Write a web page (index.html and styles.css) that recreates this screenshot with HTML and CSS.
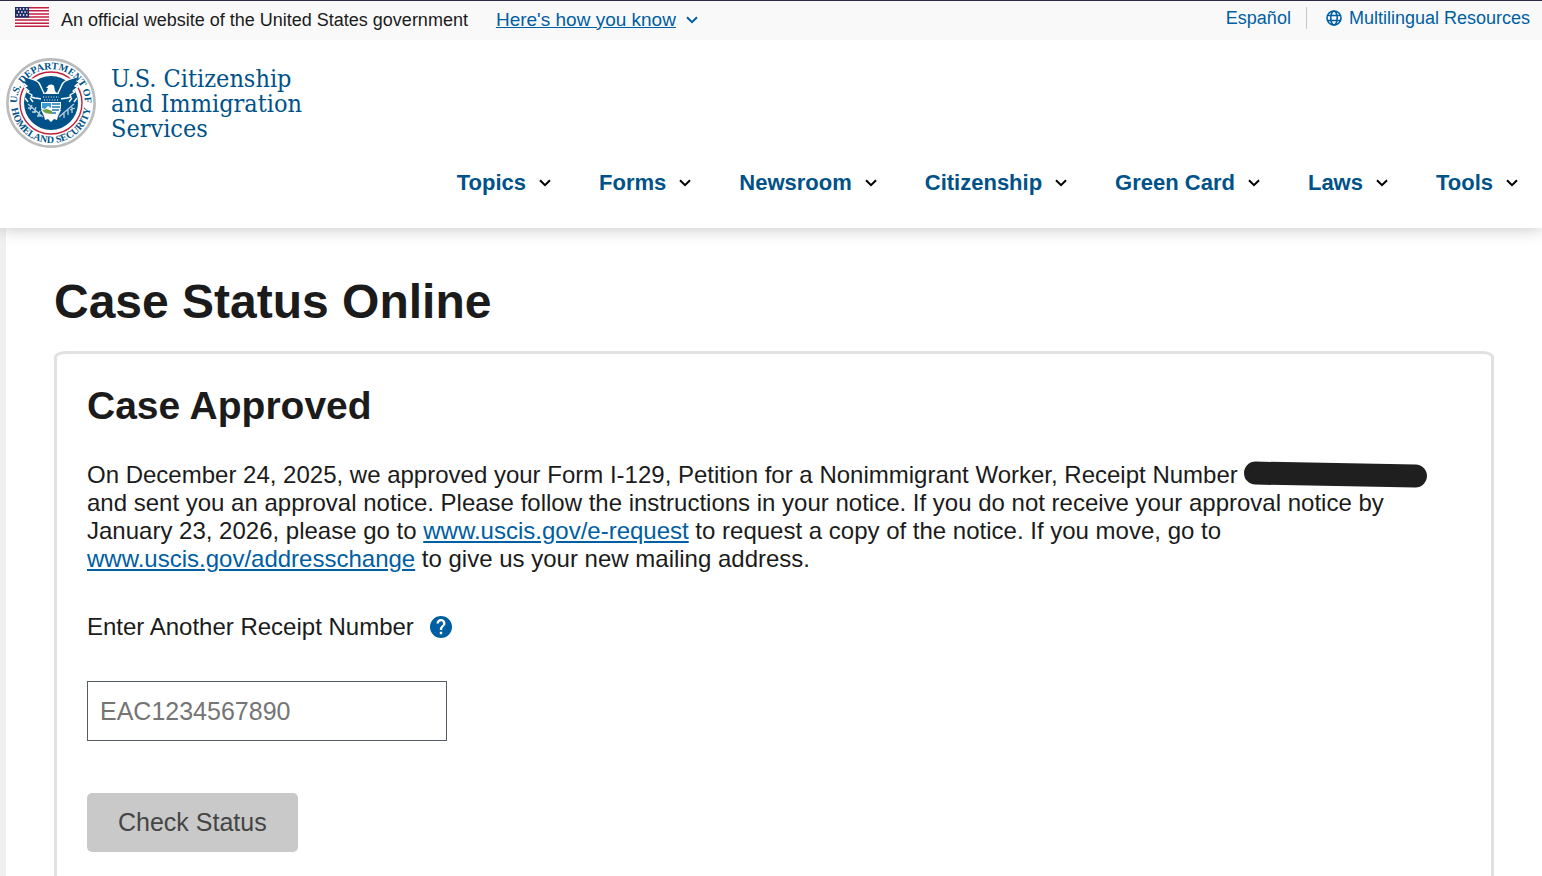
FILE: index.html
```html
<!DOCTYPE html>
<html lang="en">
<head>
    <meta charset="UTF-8">
    <meta name="viewport" content="width=device-width, initial-scale=1.0">
    <title>Case Status Online</title>
    <link rel="stylesheet" href="styles.css">
</head>
<body>
    <!-- Shared icons -->
    <svg class="sprite" aria-hidden="true">
        <symbol id="chevron" viewBox="0 0 12 8">
            <path d="M1 1.2 6 6.2 11 1.2" fill="none" stroke="currentColor" stroke-width="2"/>
        </symbol>
    </svg>

    <div class="banner">
        <svg class="flag" viewBox="0 0 34 20" aria-hidden="true">
            <rect width="34" height="20" fill="#fff"/>
            <path d="M0 .7h34M0 3.8h34M0 6.9h34M0 10h34M0 13.1h34M0 16.2h34M0 19.3h34" stroke="#c22043" stroke-width="1.5"/>
            <rect width="14" height="10.6" fill="#1f2b66"/>
            <path d="M1.5 2h12M3 5h10M1.5 8h12" stroke="#fff" stroke-width="1.4" stroke-dasharray="1.4 1.8"/>
        </svg>
        <span class="banner-text">An official website of the United States government</span>
        <a href="#" class="banner-link"><span>Here's how you know</span><svg class="chevron"><use href="#chevron"/></svg></a>
        <div class="languages">
            <a href="#">Español</a>
            <a href="#" class="multilingual">
                <svg class="globe" viewBox="0 0 16 16" aria-hidden="true">
                    <g fill="none" stroke="currentColor" stroke-width="1.6">
                        <circle cx="8" cy="8" r="7"/>
                        <ellipse cx="8" cy="8" rx="3.2" ry="7"/>
                        <path d="M1.5 5.5h13M1.5 10.5h13"/>
                    </g>
                </svg>
                Multilingual Resources
            </a>
        </div>
    </div>

    <header>
        <a href="#" class="logo">
            <svg class="seal" viewBox="0 0 90 90" aria-hidden="true">
                <defs>
                    <path id="arc-top" d="M13.500 58A34 34 0 1 1 76.500 58"/>
                    <path id="arc-bottom" d="M5 45A40 40 0 0 0 85 45"/>
                </defs>
                <circle cx="45" cy="45" r="43.6" fill="#fff" stroke="#babcbe" stroke-width="2.6"/>
                <circle cx="45" cy="45" r="31" fill="#fff" stroke="#c41e3a" stroke-width="1.4"/>
                <circle cx="45" cy="45" r="27" fill="#005288"/>
                <!-- wings -->
                <g fill="#005288" stroke="#fff" stroke-width="1.4" stroke-linejoin="round">
                    <path d="M17 18c5 3 12 2 16 7 2 3 3 7 5 10l-2 6-7-1-4-1 1-2-5-3 2-1-5-4 3-1-5-4 3-1z"/>
                    <path d="M73 18c-5 3-12 2-16 7-2 3-3 7-5 10l2 6 7-1 4-1-1-2 5-3-2-1 5-4-3-1 5-4-3-1z"/>
                </g>
                <!-- head -->
                <path d="M42 28c1-2 5-2 6 0l1 5 3 3H38l3-3 1-3-2 0z" fill="#fff"/>
                <!-- olive branch and arrows -->
                <g fill="none" stroke="#b9cfdf" stroke-width="1.3">
                    <path d="M22 46l15 13M24 52l2-5M28 55l2-6M32 58l2-5M22 50h4M26 54h4M31 58h4"/>
                    <path d="M68 46 53 59M66 49v6M62 51v6M58 54v6M69 50l-5 2"/>
                    <path d="M19 40l3 4M24 40l3 4M71 40l-3 4M66 40l-3 4" stroke="#fff"/>
                </g>
                <!-- tail -->
                <path d="M35 52l3 6 1 4 3-1 3 3 3-3 3 1 1-4 3-6z" fill="#fff"/>
                <!-- shield -->
                <path d="M35 36h20v13c0 5-5 8-10 9-5-1-10-4-10-9z" fill="#fff"/>
                <path d="M35 36h20v8H35z" fill="#005288"/>
                <path d="M37 39h16M38 42h14" stroke="#fff" stroke-width="1" stroke-dasharray="1 1.6"/>
                <path d="M36 45h9v5l-3-2-3 3-3-1z" fill="#3a9ad0"/>
                <path d="M36 52l5-1 5 2v3c-4 0-8-1-10-4z" fill="#6f9f46"/>
                <path d="M46 46h8M46 49h8M46 52h7M46 55h4" stroke="#1b78b3" stroke-width="1.5"/>
                <text class="seal-text"><textPath href="#arc-top" startOffset="50%" text-anchor="middle">U.S. DEPARTMENT OF</textPath></text>
                <text class="seal-text"><textPath href="#arc-bottom" startOffset="50%" text-anchor="middle">HOMELAND SECURITY</textPath></text>
            </svg>
            <span class="logo-text">U.S. Citizenship<br>and Immigration<br>Services</span>
        </a>
        <nav>
            <ul>
                <li><a href="#">Topics <svg class="chevron"><use href="#chevron"/></svg></a></li>
                <li><a href="#">Forms <svg class="chevron"><use href="#chevron"/></svg></a></li>
                <li><a href="#">Newsroom <svg class="chevron"><use href="#chevron"/></svg></a></li>
                <li><a href="#">Citizenship <svg class="chevron"><use href="#chevron"/></svg></a></li>
                <li><a href="#">Green Card <svg class="chevron"><use href="#chevron"/></svg></a></li>
                <li><a href="#">Laws <svg class="chevron"><use href="#chevron"/></svg></a></li>
                <li><a href="#">Tools <svg class="chevron"><use href="#chevron"/></svg></a></li>
            </ul>
        </nav>
    </header>

    <main>
        <h1>Case Status Online</h1>
        <section class="card">
            <h2>Case Approved</h2>
            <p>On December 24, 2025, we approved your Form I-129, Petition for a Nonimmigrant Worker, Receipt Number <span class="redacted"></span> and sent you an approval notice. Please follow the instructions in your notice. If you do not receive your approval notice by January 23, 2026, please go to <a href="#">www.uscis.gov/e-request</a> to request a copy of the notice. If you move, go to <a href="#">www.uscis.gov/addresschange</a> to give us your new mailing address.</p>
            <form>
                <div class="label-row">
                    <label for="receipt">Enter Another Receipt Number</label>
                    <button type="button" class="help" aria-label="Help">
                        <svg viewBox="1 1 22 22"><path d="M12 1a11 11 0 1 0 0 22 11 11 0 0 0 0-22zm1.200 18.200h-2.400v-2.400h2.400v2.400zm2.400-8.600-1.100 1.100c-.8.9-1.300 1.600-1.300 3.300h-2.400v-.6c0-1.200.5-2.300 1.300-3.100l1.400-1.400c.4-.4.6-.9.6-1.500a2.100 2.100 0 0 0-4.200 0H7.500a4.500 4.500 0 0 1 9 0c0 .9-.4 1.700-.9 2.200z" fill="currentColor"/></svg>
                    </button>
                </div>
                <input type="text" id="receipt" name="receipt" placeholder="EAC1234567890">
                <button type="submit" class="btn" disabled>Check Status</button>
            </form>
        </section>
    </main>
</body>
</html>
```
FILE: styles.css
```css
:root {
    --link-color: #005ea2;
    --brand-color: #005288;
    --text-color: #1b1b1b;
    --border-color: #dfe1e2;
}

* {
    margin: 0;
    padding: 0;
    box-sizing: border-box;
}

body {
    font-family: "Liberation Sans", Arial, sans-serif;
    font-size: 24px;
    line-height: 28px;
    color: var(--text-color);
    background-color: #fff;
}

a {
    color: var(--link-color);
}

.sprite {
    position: absolute;
    width: 0;
    height: 0;
}

.chevron {
    width: 12px;
    height: 8px;
}

.banner {
    display: flex;
    align-items: center;
    height: 40px;
    padding: 0 12px 2px 15px;
    border-top: 1px solid #2b2b45;
    background-color: #f9f9f9;
    font-size: 18px;
}

.flag {
    width: 34px;
    height: 20px;
    margin-bottom: 6px;
}

.banner-text {
    margin: 0 28px 0 12px;
}

.banner-link {
    display: flex;
    align-items: center;
    gap: 10px;
    font-size: 19px;
    text-decoration: none;
}

.banner-link span {
    text-decoration: underline;
}

.languages {
    display: flex;
    align-items: center;
    margin: 0 0 4px auto;
}

.languages a {
    line-height: 22px;
    text-decoration: none;
}

.languages .multilingual {
    display: flex;
    align-items: center;
    gap: 7px;
    margin-left: 15px;
    padding-left: 19px;
    border-left: 1px solid #c6c8ca;
}

.globe {
    width: 16px;
    height: 16px;
}

header {
    position: relative;
    padding: 18px 24px 30px 6px;
    background-color: #fff;
    box-shadow: 0 0 16px rgba(0, 0, 0, 0.25);
    clip-path: inset(0 0 -20px 0);
}

.logo {
    display: flex;
    gap: 15px;
    color: var(--brand-color);
    text-decoration: none;
}

.seal {
    width: 90px;
    height: 90px;
}

.seal-text {
    font-family: "Liberation Serif", serif;
    font-size: 10px;
    font-weight: bold;
    fill: var(--brand-color);
}

.logo-text {
    padding-top: 8px;
    font-family: "DejaVu Serif Condensed", "DejaVu Serif", serif;
    font-size: 25px;
    line-height: 25px;
}

nav ul {
    display: flex;
    justify-content: flex-end;
    gap: 48px;
    margin-top: 20px;
    list-style: none;
}

nav a {
    display: flex;
    align-items: center;
    gap: 13px;
    font-size: 22px;
    line-height: 30px;
    font-weight: bold;
    color: var(--brand-color);
    text-decoration: none;
}

nav .chevron {
    color: #000;
}

main {
    padding: 46px 48px 0;
    border-left: 6px solid #f0f0f0;
}

h1 {
    margin-bottom: 21px;
    font-size: 48px;
    line-height: 56px;
}

.card {
    padding: 30px 30px 48px;
    border: 3px solid var(--border-color);
    border-radius: 12px 12px 0 0 / 6px 6px 0 0;
}

h2 {
    margin-bottom: 33px;
    font-size: 39px;
    line-height: 44px;
}

.redacted {
    display: inline-block;
    width: 183px;
    height: 23px;
    margin-top: -4px;
    border-radius: 12px;
    background-color: #1f1f1f;
    vertical-align: -3px;
    transform: rotate(1deg);
}

.label-row {
    display: flex;
    align-items: center;
    gap: 16px;
    margin-top: 40px;
}

.help {
    width: 22px;
    height: 22px;
    border: none;
    background: none;
    color: var(--link-color);
}

.help svg {
    display: block;
}

input {
    display: block;
    width: 360px;
    height: 60px;
    margin: 40px 0 52px;
    padding: 0 12px;
    border: 1px solid #565c65;
    font-family: inherit;
    font-size: 25px;
}

input::placeholder {
    color: #757575;
}

.btn {
    padding: 14px 31px;
    border: none;
    border-radius: 5px;
    background-color: #c9c9c9;
    font-family: inherit;
    font-size: 25px;
    line-height: 31px;
    color: #454545;
}
```
